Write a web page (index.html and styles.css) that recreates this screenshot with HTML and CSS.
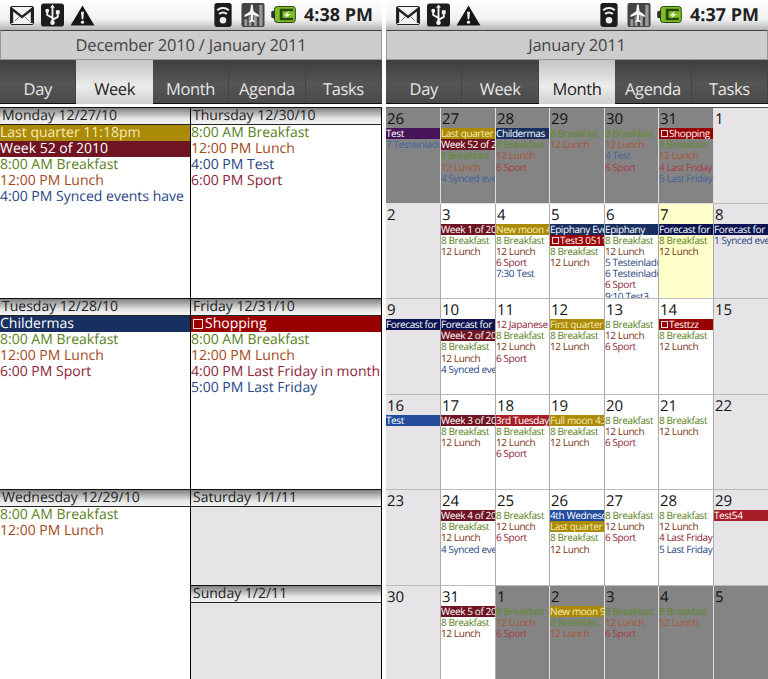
FILE: index.html
```html
<!DOCTYPE html>
<html lang="en">
<head>
    <meta charset="UTF-8">
    <meta name="viewport" content="width=device-width, initial-scale=1.0">
    <title>Calendar Week and Month</title>
    <link rel="stylesheet" href="styles.css">
</head>
<body>
    <!-- Status bar icons, used by both screens -->
    <svg class="icon-defs" width="0" height="0">
        <symbol id="i-gmail" viewBox="0 0 24 19">
            <rect x="0.5" y="0.5" width="23" height="18" rx="1.5" fill="#f4f4f4" stroke="#222"/>
            <path d="M2 17V3l10 8 10-8v14" fill="none" stroke="#222" stroke-width="2.4"/>
            <path d="M5 15l5-5M19 15l-5-5" fill="none" stroke="#777"/>
        </symbol>
        <symbol id="i-usb" viewBox="0 0 24 24">
            <rect width="24" height="24" rx="3" fill="#1c1c1c"/>
            <path d="M12 2.5v17M12 15l-5.5-3V8.5M12 17l5.5-3v-4" fill="none" stroke="#f2f2f2" stroke-width="2"/>
            <path d="M12 1l-2.5 3.5h5z" fill="#f2f2f2"/>
            <circle cx="6.5" cy="7.5" r="2" fill="#f2f2f2"/>
            <rect x="15.5" y="7" width="4" height="4" fill="#f2f2f2"/>
            <circle cx="12" cy="20" r="2.4" fill="#f2f2f2"/>
        </symbol>
        <symbol id="i-warn" viewBox="0 0 25 22">
            <path d="M12.5 0.5L25 21.5H0z" fill="#161616"/>
            <path d="M11 7h3l-.6 8h-1.8z" fill="#f4f4f4"/>
            <circle cx="12.5" cy="18" r="1.7" fill="#f4f4f4"/>
        </symbol>
        <symbol id="i-wifi" viewBox="0 0 18 25">
            <rect width="18" height="25" rx="3" fill="#1c1c1c"/>
            <path d="M3 7.5a9 9 0 0 1 12 0M5 11.5a6 6 0 0 1 8 0" fill="none" stroke="#eee" stroke-width="2.2"/>
            <circle cx="9" cy="18" r="3.4" fill="#eee"/>
        </symbol>
        <symbol id="i-plane" viewBox="0 0 24 25">
            <rect width="24" height="25" rx="2" fill="#444"/>
            <rect x="3" y="17" width="3" height="7" fill="#999"/>
            <rect x="7.5" y="14" width="3" height="10" fill="#999"/>
            <rect x="13" y="11" width="3" height="13" fill="#999"/>
            <rect x="18.5" y="2" width="3.5" height="22" fill="#999"/>
            <path d="M10 1.5h1.6l1 7 5.4 4v2l-5.6-2.2-.4 5 1.8 1.6v1.4l-2.8-1-2.8 1v-1.4l1.8-1.6-.4-5L3.2 14.5v-2l5.8-4z" fill="#f6f6f6"/>
        </symbol>
        <symbol id="i-battery" viewBox="0 0 26 18">
            <rect x="0" y="5" width="5" height="8" rx="2" fill="#333"/>
            <rect x="3.5" y="0.5" width="22" height="17" rx="3" fill="#7cc024" stroke="#24340e"/>
            <path d="M9 3h14v2.5H12v7h11V15H9z" fill="#2c4410"/>
            <path d="M19 5l-6 5h3.5l-2 3.5 6-5h-3.5z" fill="#f2f7e2"/>
        </symbol>
    </svg>

    <div class="phones">
        <!-- Week view -->
        <section class="screen">
            <div class="status">
                <svg class="ic ic-gmail"><use href="#i-gmail"/></svg>
                <svg class="ic ic-usb"><use href="#i-usb"/></svg>
                <svg class="ic ic-warn"><use href="#i-warn"/></svg>
                <svg class="ic ic-wifi"><use href="#i-wifi"/></svg>
                <svg class="ic ic-plane"><use href="#i-plane"/></svg>
                <svg class="ic ic-battery"><use href="#i-battery"/></svg>
                <span class="clock">4:38 PM</span>
            </div>
            <h1 class="title">December 2010 / January 2011</h1>
            <nav class="tabs">
                <span class="tab">Day</span>
                <span class="tab active">Week</span>
                <span class="tab">Month</span>
                <span class="tab">Agenda</span>
                <span class="tab">Tasks</span>
            </nav>
            <div class="week">
                <div class="day">
                    <div class="day-head">Monday 12/27/10</div>
                    <div class="item bar-gold">Last quarter 11:18pm</div>
                    <div class="item bar-maroon">Week 52 of 2010</div>
                    <div class="item green">8:00 AM Breakfast</div>
                    <div class="item orange">12:00 PM Lunch</div>
                    <div class="item blue">4:00 PM Synced events have</div>
                </div>
                <div class="day">
                    <div class="day-head">Tuesday 12/28/10</div>
                    <div class="item bar-navy">Childermas</div>
                    <div class="item green">8:00 AM Breakfast</div>
                    <div class="item orange">12:00 PM Lunch</div>
                    <div class="item red">6:00 PM Sport</div>
                </div>
                <div class="day">
                    <div class="day-head">Wednesday 12/29/10</div>
                    <div class="item green">8:00 AM Breakfast</div>
                    <div class="item orange">12:00 PM Lunch</div>
                </div>
                <div class="day">
                    <div class="day-head">Thursday 12/30/10</div>
                    <div class="item green">8:00 AM Breakfast</div>
                    <div class="item orange">12:00 PM Lunch</div>
                    <div class="item blue">4:00 PM Test</div>
                    <div class="item red">6:00 PM Sport</div>
                </div>
                <div class="day">
                    <div class="day-head">Friday 12/31/10</div>
                    <div class="item bar-red"><span class="check"></span>Shopping</div>
                    <div class="item green">8:00 AM Breakfast</div>
                    <div class="item orange">12:00 PM Lunch</div>
                    <div class="item red">4:00 PM Last Friday in month</div>
                    <div class="item blue">5:00 PM Last Friday</div>
                </div>
                <div class="day short weekend">
                    <div class="day-head">Saturday 1/1/11</div>
                </div>
                <div class="day short weekend">
                    <div class="day-head">Sunday 1/2/11</div>
                </div>
            </div>
        </section>

        <!-- Month view -->
        <section class="screen">
            <div class="status">
                <svg class="ic ic-gmail"><use href="#i-gmail"/></svg>
                <svg class="ic ic-usb"><use href="#i-usb"/></svg>
                <svg class="ic ic-warn"><use href="#i-warn"/></svg>
                <svg class="ic ic-wifi"><use href="#i-wifi"/></svg>
                <svg class="ic ic-plane"><use href="#i-plane"/></svg>
                <svg class="ic ic-battery"><use href="#i-battery"/></svg>
                <span class="clock">4:37 PM</span>
            </div>
            <h1 class="title">January 2011</h1>
            <nav class="tabs">
                <span class="tab">Day</span>
                <span class="tab">Week</span>
                <span class="tab active">Month</span>
                <span class="tab">Agenda</span>
                <span class="tab">Tasks</span>
            </nav>
            <div class="month">
                <div class="cell out">
                    <b>26</b>
                    <p class="bar-purple">Test</p>
                    <p class="blue">7 Testeinladung</p>
                </div>
                <div class="cell out">
                    <b>27</b>
                    <p class="bar-gold">Last quarter 11</p>
                    <p class="bar-maroon">Week 52 of 2010</p>
                    <p class="green">8 Breakfast</p>
                    <p class="orange">12 Lunch</p>
                    <p class="blue">4 Synced events</p>
                </div>
                <div class="cell out">
                    <b>28</b>
                    <p class="bar-navy">Childermas</p>
                    <p class="green">8 Breakfast</p>
                    <p class="orange">12 Lunch</p>
                    <p class="red">6 Sport</p>
                </div>
                <div class="cell out">
                    <b>29</b>
                    <p class="green">8 Breakfast</p>
                    <p class="orange">12 Lunch</p>
                </div>
                <div class="cell out">
                    <b>30</b>
                    <p class="green">8 Breakfast</p>
                    <p class="orange">12 Lunch</p>
                    <p class="blue">4 Test</p>
                    <p class="red">6 Sport</p>
                </div>
                <div class="cell out">
                    <b>31</b>
                    <p class="bar-red"><span class="check"></span>Shopping</p>
                    <p class="green">8 Breakfast</p>
                    <p class="orange">12 Lunch</p>
                    <p class="red">4 Last Friday</p>
                    <p class="blue">5 Last Friday</p>
                </div>
                <div class="cell weekend"><b>1</b></div>

                <div class="cell weekend"><b>2</b></div>
                <div class="cell">
                    <b>3</b>
                    <p class="bar-maroon">Week 1 of 2011</p>
                    <p class="green">8 Breakfast</p>
                    <p class="orange">12 Lunch</p>
                </div>
                <div class="cell">
                    <b>4</b>
                    <p class="bar-gold">New moon 4:03am</p>
                    <p class="green">8 Breakfast</p>
                    <p class="orange">12 Lunch</p>
                    <p class="red">6 Sport</p>
                    <p class="blue">7:30 Test</p>
                </div>
                <div class="cell">
                    <b>5</b>
                    <p class="bar-navy">Epiphany Eve</p>
                    <p class="bar-red"><span class="check"></span>Test3 0511</p>
                    <p class="green">8 Breakfast</p>
                    <p class="orange">12 Lunch</p>
                </div>
                <div class="cell">
                    <b>6</b>
                    <p class="bar-navy">Epiphany</p>
                    <p class="green">8 Breakfast</p>
                    <p class="orange">12 Lunch</p>
                    <p class="blue">5 Testeinladung</p>
                    <p class="blue">6 Testeinladung</p>
                    <p class="red">6 Sport</p>
                    <p class="blue">9:10 Test3</p>
                </div>
                <div class="cell today">
                    <b>7</b>
                    <p class="bar-ink">Forecast for</p>
                    <p class="green">8 Breakfast</p>
                    <p class="orange">12 Lunch</p>
                </div>
                <div class="cell weekend">
                    <b>8</b>
                    <p class="bar-ink">Forecast for</p>
                    <p class="blue">1 Synced events</p>
                </div>

                <div class="cell weekend">
                    <b>9</b>
                    <p class="bar-ink">Forecast for</p>
                </div>
                <div class="cell">
                    <b>10</b>
                    <p class="bar-ink">Forecast for</p>
                    <p class="bar-maroon">Week 2 of 2011</p>
                    <p class="green">8 Breakfast</p>
                    <p class="orange">12 Lunch</p>
                    <p class="blue">4 Synced events</p>
                </div>
                <div class="cell">
                    <b>11</b>
                    <p class="red">12 Japanese</p>
                    <p class="green">8 Breakfast</p>
                    <p class="orange">12 Lunch</p>
                    <p class="red">6 Sport</p>
                </div>
                <div class="cell">
                    <b>12</b>
                    <p class="bar-gold">First quarter</p>
                    <p class="green">8 Breakfast</p>
                    <p class="orange">12 Lunch</p>
                </div>
                <div class="cell">
                    <b>13</b>
                    <p class="green">8 Breakfast</p>
                    <p class="orange">12 Lunch</p>
                    <p class="red">6 Sport</p>
                </div>
                <div class="cell">
                    <b>14</b>
                    <p class="bar-red"><span class="check"></span>Testtzz</p>
                    <p class="green">8 Breakfast</p>
                    <p class="orange">12 Lunch</p>
                </div>
                <div class="cell weekend"><b>15</b></div>

                <div class="cell weekend">
                    <b>16</b>
                    <p class="bar-blue">Test</p>
                </div>
                <div class="cell">
                    <b>17</b>
                    <p class="bar-maroon">Week 3 of 2011</p>
                    <p class="green">8 Breakfast</p>
                    <p class="orange">12 Lunch</p>
                </div>
                <div class="cell">
                    <b>18</b>
                    <p class="bar-crimson">3rd Tuesday</p>
                    <p class="green">8 Breakfast</p>
                    <p class="orange">12 Lunch</p>
                    <p class="red">6 Sport</p>
                </div>
                <div class="cell">
                    <b>19</b>
                    <p class="bar-gold">Full moon 4:21</p>
                    <p class="green">8 Breakfast</p>
                    <p class="orange">12 Lunch</p>
                </div>
                <div class="cell">
                    <b>20</b>
                    <p class="green">8 Breakfast</p>
                    <p class="orange">12 Lunch</p>
                    <p class="red">6 Sport</p>
                </div>
                <div class="cell">
                    <b>21</b>
                    <p class="green">8 Breakfast</p>
                    <p class="orange">12 Lunch</p>
                </div>
                <div class="cell weekend"><b>22</b></div>

                <div class="cell weekend"><b>23</b></div>
                <div class="cell">
                    <b>24</b>
                    <p class="bar-maroon">Week 4 of 2011</p>
                    <p class="green">8 Breakfast</p>
                    <p class="orange">12 Lunch</p>
                    <p class="blue">4 Synced events</p>
                </div>
                <div class="cell">
                    <b>25</b>
                    <p class="green">8 Breakfast</p>
                    <p class="orange">12 Lunch</p>
                    <p class="red">6 Sport</p>
                </div>
                <div class="cell">
                    <b>26</b>
                    <p class="bar-blue">4th Wednesday</p>
                    <p class="bar-gold">Last quarter</p>
                    <p class="green">8 Breakfast</p>
                    <p class="orange">12 Lunch</p>
                </div>
                <div class="cell">
                    <b>27</b>
                    <p class="green">8 Breakfast</p>
                    <p class="orange">12 Lunch</p>
                    <p class="red">6 Sport</p>
                </div>
                <div class="cell">
                    <b>28</b>
                    <p class="green">8 Breakfast</p>
                    <p class="orange">12 Lunch</p>
                    <p class="red">4 Last Friday</p>
                    <p class="blue">5 Last Friday</p>
                </div>
                <div class="cell weekend">
                    <b>29</b>
                    <p class="bar-crimson">Test54</p>
                </div>

                <div class="cell weekend"><b>30</b></div>
                <div class="cell">
                    <b>31</b>
                    <p class="bar-maroon">Week 5 of 2011</p>
                    <p class="green">8 Breakfast</p>
                    <p class="orange">12 Lunch</p>
                </div>
                <div class="cell out">
                    <b>1</b>
                    <p class="green">8 Breakfast</p>
                    <p class="orange">12 Lunch</p>
                    <p class="red">6 Sport</p>
                </div>
                <div class="cell out">
                    <b>2</b>
                    <p class="bar-gold">New moon 9:02</p>
                    <p class="green">8 Breakfast</p>
                    <p class="orange">12 Lunch</p>
                </div>
                <div class="cell out">
                    <b>3</b>
                    <p class="green">8 Breakfast</p>
                    <p class="orange">12 Lunch</p>
                    <p class="red">6 Sport</p>
                </div>
                <div class="cell out">
                    <b>4</b>
                    <p class="green">8 Breakfast</p>
                    <p class="orange">12 Lunch</p>
                </div>
                <div class="cell out"><b>5</b></div>
            </div>
        </section>
    </div>
</body>
</html>
```

FILE: styles.css
```css
/* Global Styling */
html, body {
    height: 679px;
    overflow: hidden;
}
body {
    margin: 0;
    background-color: #fff;
    font-family: "Open Sans", "Noto Sans", sans-serif;
    text-rendering: geometricPrecision;
}
.icon-defs {
    position: absolute;
}
.phones {
    display: flex;
    gap: 4px;
}
.screen {
    width: 382px;
    height: 679px;
    overflow: hidden;
    flex: none;
}

/* Status bar */
.status {
    height: 30px;
    box-sizing: border-box;
    padding: 3px 9px 0 10px;
    display: flex;
    align-items: flex-start;
    background: linear-gradient(#fff, #f0f0f0 65%, #b5b5b5);
}
.ic {
    display: block;
    flex: none;
}
.ic-gmail { width: 24px; height: 19px; margin-top: 3px; }
.ic-usb { width: 23px; height: 24px; margin-left: 7px; }
.ic-warn { width: 25px; height: 21px; margin-left: 6px; margin-top: 2px; }
.ic-wifi { width: 18px; height: 24px; margin-left: auto; }
.ic-plane { width: 24px; height: 24px; margin-left: 9px; }
.ic-battery { width: 25px; height: 17px; margin-left: 6px; margin-top: 3px; }
.clock {
    margin-left: 8px;
    font-size: 18px;
    font-weight: 700;
    line-height: 24px;
    color: #222;
    white-space: nowrap;
}

/* Title and tabs */
.title {
    margin: 0;
    height: 30px;
    box-sizing: border-box;
    border-top: 1px solid #444;
    border-left: 1px solid #999;
    border-right: 1px solid #999;
    border-bottom: 1px solid #999;
    background-color: #cdcdcd;
    color: #444;
    font-size: 16.5px;
    letter-spacing: -0.2px;
    font-weight: 400;
    line-height: 27px;
    text-align: center;
}
.tabs {
    height: 44px;
    display: grid;
    grid-template-columns: repeat(5, 1fr);
    border-bottom: 1px solid #111;
    box-sizing: border-box;
}
.tab {
    display: flex;
    align-items: flex-end;
    justify-content: center;
    padding-bottom: 3px;
    border-right: 1px solid #444;
    background: linear-gradient(#3f3f3f, #555 55%, #4a4a4a);
    color: #e6e6e6;
    font-size: 16.5px;
    letter-spacing: -0.4px;
}
.tab.active {
    padding-bottom: 4px;
    background: linear-gradient(#c4c4c4, #ececec 60%, #d0d0d0);
    color: #222;
    border-right: 0;
    margin-bottom: -1px;
}

/* Week view */
.week {
    height: 572px;
    margin-top: 3px;
    display: grid;
    grid-auto-flow: column;
    grid-template-columns: 191px 191px;
    grid-template-rows: repeat(6, 95.5px);
}
.day {
    grid-row: span 2;
    border-right: 1px solid #000;
    background-color: #fff;
    overflow: hidden;
}
.day.short {
    grid-row: span 1;
}
.day.weekend {
    background-color: #e6e4e7;
}
.day-head {
    height: 18px;
    box-sizing: border-box;
    border-top: 1px solid #111;
    border-bottom: 1px solid #222;
    padding-left: 2px;
    background: linear-gradient(#808080, #e4e4e4 65%, #f4f4f4);
    color: #222;
    font-size: 14px;
    line-height: 16px;
    white-space: nowrap;
}
.item {
    height: 16px;
    box-sizing: border-box;
    padding-top: 1px;
    font-size: 14px;
    line-height: 14px;
    white-space: nowrap;
    overflow: hidden;
}

/* Month view */
.month {
    height: 572px;
    margin-top: 3px;
    display: grid;
    grid-template-columns: 55px 55px 54px 55px 54px 55px 54px;
    grid-template-rows: repeat(6, 95.5px);
    border-top: 1px solid #555;
    box-sizing: border-box;
}
.cell {
    overflow: hidden;
    border-right: 1px solid #aaa;
    border-bottom: 1px solid #bbb;
    background-color: #fff;
}
.cell:nth-child(7n) {
    border-right: 0;
}
.cell b {
    display: block;
    height: 20px;
    padding-left: 1px;
    font-size: 15px;
    font-weight: 400;
    line-height: 22px;
    color: #111;
}
.cell p {
    margin: 0;
    height: 11.2px;
    font-size: 10px;
    letter-spacing: -0.4px;
    line-height: 11px;
    white-space: nowrap;
    overflow: hidden;
}
.cell.weekend {
    background-color: #e6e4e7;
}
.cell.today {
    background-color: #ffffcc;
}
.cell.out {
    background-color: #848484;
    border-right-color: #ddd;
    border-bottom-color: #ddd;
}

/* Event colours */
.green { color: #5a7f1c; }
.orange { color: #a5471a; }
.red { color: #8c2438; }
.blue { color: #2a4585; }
.cell .orange { color: #7a3210; }
.cell.out .green { color: #5f8a2a; }
.cell.out .orange { color: #a95636; }
.cell.out .red { color: #a83a46; }
.cell.out .blue { color: #44639f; }

.bar-gold { background-color: #ab8a07; color: #f6ecb4; }
.bar-maroon { background-color: #6e1422; color: #fff; }
.bar-navy { background-color: #17305f; color: #fff; }
.bar-ink { background-color: #0b1450; color: #fff; }
.bar-purple { background-color: #47145a; color: #fff; }
.bar-blue { background-color: #234c9d; color: #fff; }
.bar-red { background-color: #990000; color: #fff; }
.bar-crimson { background-color: #a81e28; color: #fff; }
.check {
    display: inline-block;
    width: 10px;
    height: 10px;
    box-sizing: border-box;
    margin: 0 2px 0 2px;
    border: 1px solid #f3dede;
    vertical-align: -1px;
}
.cell .check {
    width: 7px;
    height: 7px;
    margin: 0 1px 0 2px;
    vertical-align: 0;
}
```
